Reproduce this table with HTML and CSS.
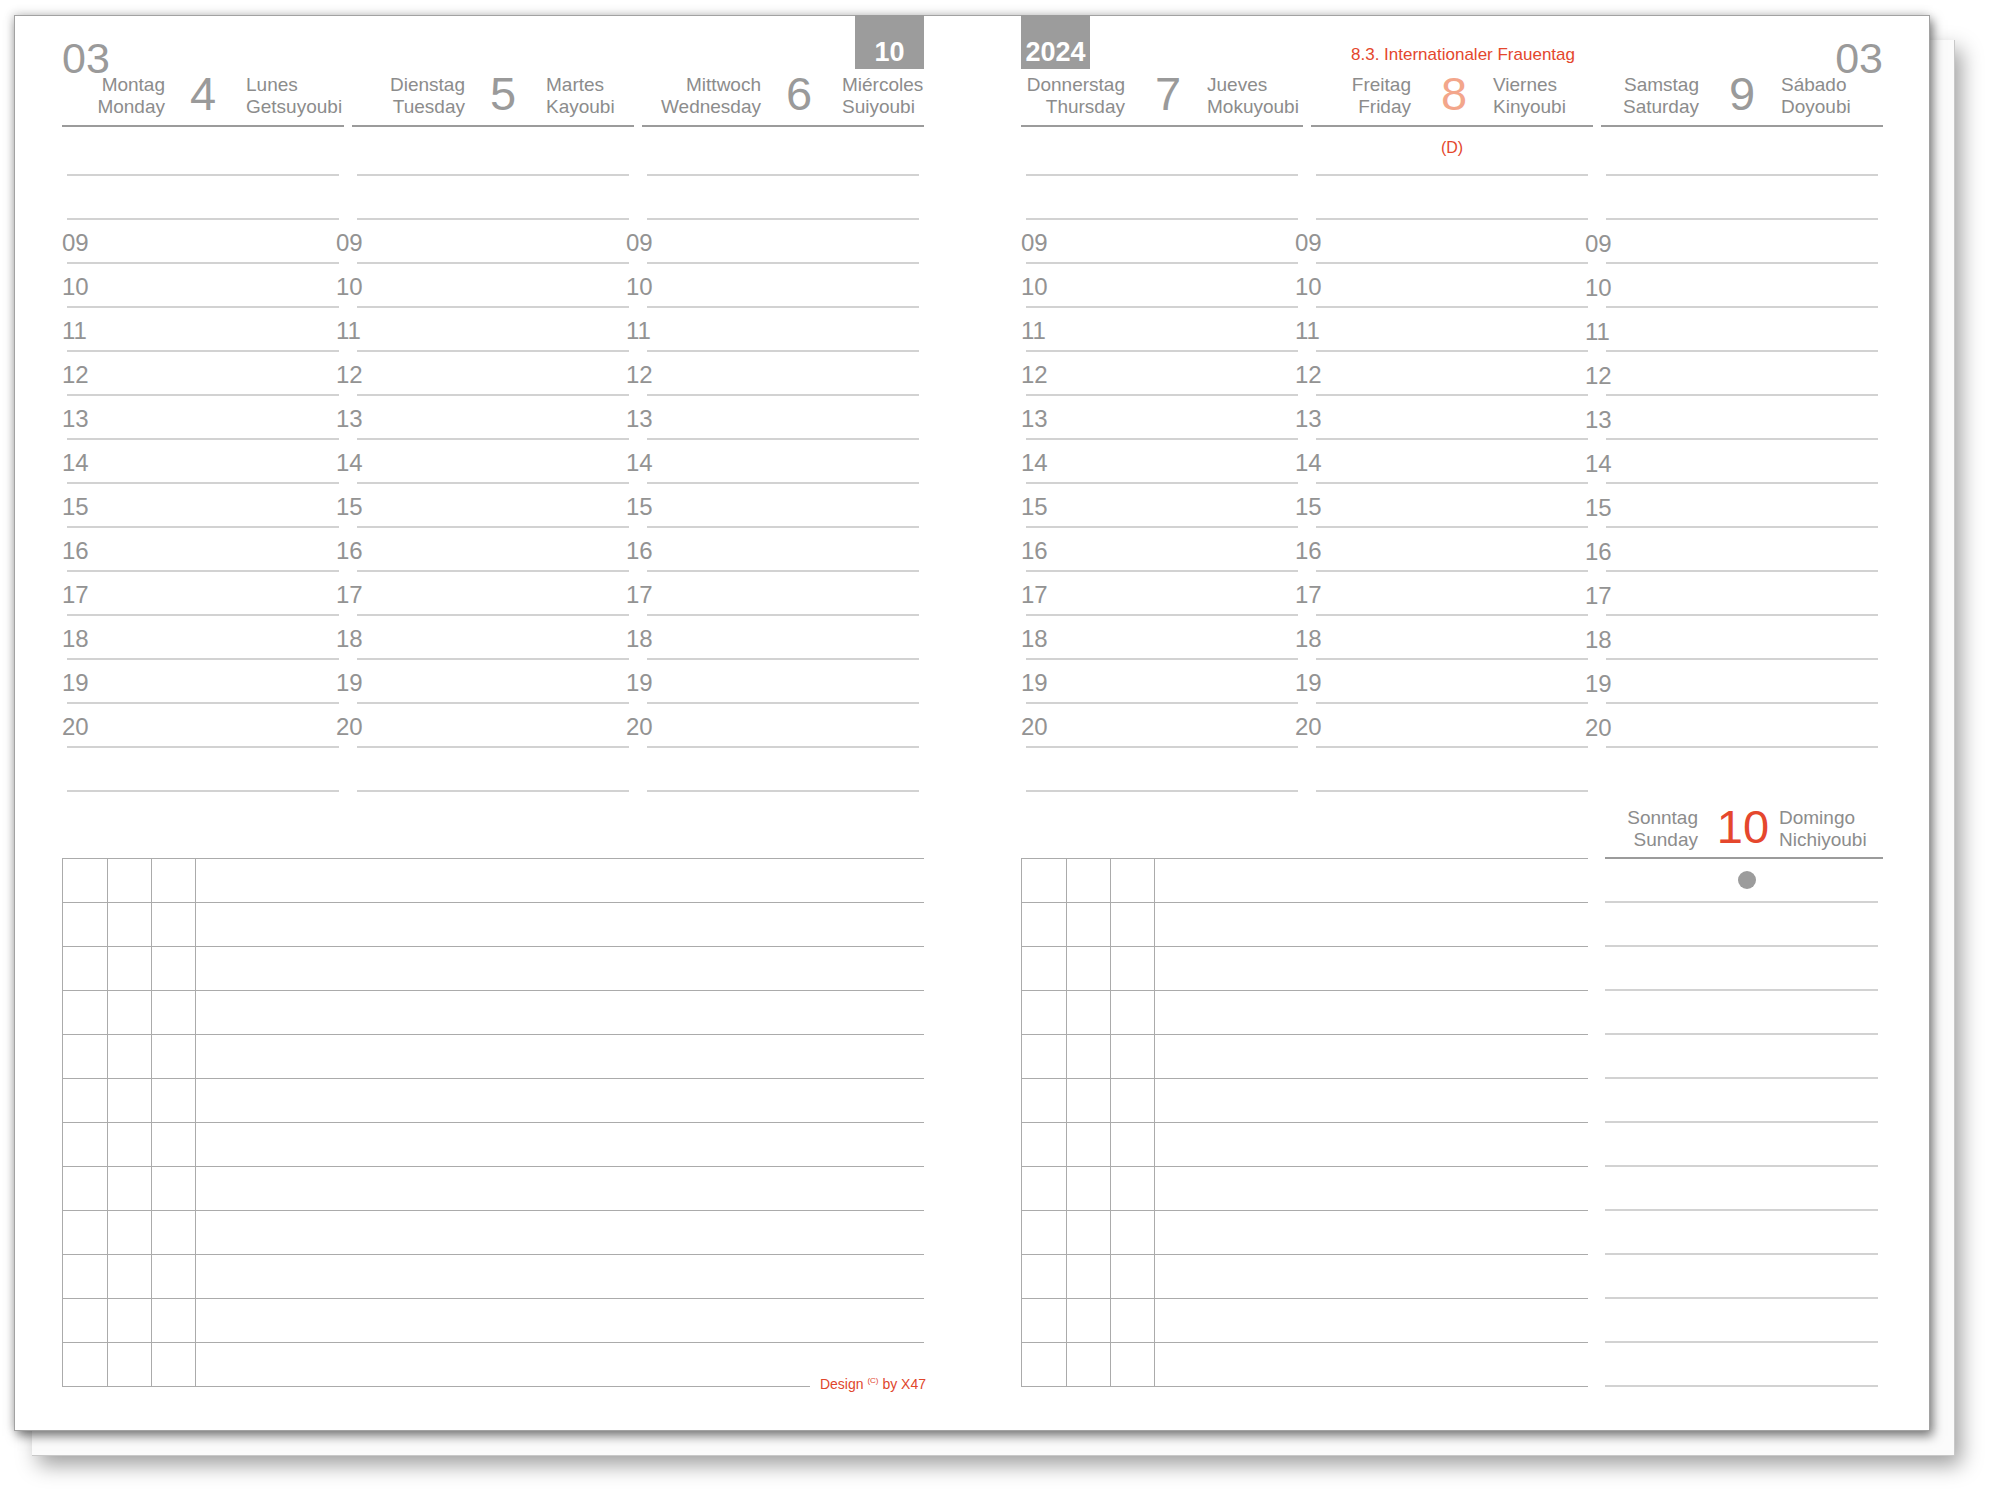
FILE: index.html
```html
<!DOCTYPE html>
<html lang="de">
<head>
<meta charset="utf-8">
<title>Wochenkalender 2024 – KW 10</title>
<link rel="stylesheet" href="styles.css">
</head>
<body>
<div class="book">
  <div class="back"></div>
  <div class="sheet">

    <section class="page left">
      <div class="days">
        <div class="day first">
          <div class="dhead">
            <div class="slot"><span class="month">03</span></div>
            <div class="drow">
              <div class="dl"><span>Montag</span><span>Monday</span></div>
              <div class="dn">4</div>
              <div class="dr"><span>Lunes</span><span>Getsuyoubi</span></div>
            </div>
          </div>
          <div class="rows">
            <div class="row"></div><div class="row"></div>
            <div class="row"><span class="hr">09</span></div>
            <div class="row"><span class="hr">10</span></div>
            <div class="row"><span class="hr">11</span></div>
            <div class="row"><span class="hr">12</span></div>
            <div class="row"><span class="hr">13</span></div>
            <div class="row"><span class="hr">14</span></div>
            <div class="row"><span class="hr">15</span></div>
            <div class="row"><span class="hr">16</span></div>
            <div class="row"><span class="hr">17</span></div>
            <div class="row"><span class="hr">18</span></div>
            <div class="row"><span class="hr">19</span></div>
            <div class="row"><span class="hr">20</span></div>
            <div class="row"></div>
          </div>
        </div>

        <div class="day">
          <div class="dhead">
            <div class="slot"></div>
            <div class="drow sh10">
              <div class="dl"><span>Dienstag</span><span>Tuesday</span></div>
              <div class="dn">5</div>
              <div class="dr"><span>Martes</span><span>Kayoubi</span></div>
            </div>
          </div>
          <div class="rows">
            <div class="row"></div><div class="row"></div>
            <div class="row"><span class="hr">09</span></div>
            <div class="row"><span class="hr">10</span></div>
            <div class="row"><span class="hr">11</span></div>
            <div class="row"><span class="hr">12</span></div>
            <div class="row"><span class="hr">13</span></div>
            <div class="row"><span class="hr">14</span></div>
            <div class="row"><span class="hr">15</span></div>
            <div class="row"><span class="hr">16</span></div>
            <div class="row"><span class="hr">17</span></div>
            <div class="row"><span class="hr">18</span></div>
            <div class="row"><span class="hr">19</span></div>
            <div class="row"><span class="hr">20</span></div>
            <div class="row"></div>
          </div>
        </div>

        <div class="day">
          <div class="dhead">
            <div class="slot end"><span class="tab">10</span></div>
            <div class="drow sh16">
              <div class="dl"><span>Mittwoch</span><span>Wednesday</span></div>
              <div class="dn">6</div>
              <div class="dr"><span>Miércoles</span><span>Suiyoubi</span></div>
            </div>
          </div>
          <div class="rows">
            <div class="row"></div><div class="row"></div>
            <div class="row"><span class="hr">09</span></div>
            <div class="row"><span class="hr">10</span></div>
            <div class="row"><span class="hr">11</span></div>
            <div class="row"><span class="hr">12</span></div>
            <div class="row"><span class="hr">13</span></div>
            <div class="row"><span class="hr">14</span></div>
            <div class="row"><span class="hr">15</span></div>
            <div class="row"><span class="hr">16</span></div>
            <div class="row"><span class="hr">17</span></div>
            <div class="row"><span class="hr">18</span></div>
            <div class="row"><span class="hr">19</span></div>
            <div class="row"><span class="hr">20</span></div>
            <div class="row"></div>
          </div>
        </div>
      </div>

      <div class="grid">
        <div class="gr"><i></i><i></i><i></i><b></b></div>
        <div class="gr"><i></i><i></i><i></i><b></b></div>
        <div class="gr"><i></i><i></i><i></i><b></b></div>
        <div class="gr"><i></i><i></i><i></i><b></b></div>
        <div class="gr"><i></i><i></i><i></i><b></b></div>
        <div class="gr"><i></i><i></i><i></i><b></b></div>
        <div class="gr"><i></i><i></i><i></i><b></b></div>
        <div class="gr"><i></i><i></i><i></i><b></b></div>
        <div class="gr"><i></i><i></i><i></i><b></b></div>
        <div class="gr"><i></i><i></i><i></i><b></b></div>
        <div class="gr"><i></i><i></i><i></i><b></b></div>
        <div class="gr"><i></i><i></i><i></i><b class="sign"><span class="ln"></span><span class="design">Design <sup>(C)</sup> by X47</span></b></div>
      </div>
    </section>

    <section class="page right">
      <div class="main">
        <div class="days two">
          <div class="day first">
            <div class="dhead">
              <div class="slot"><span class="tab">2024</span></div>
              <div class="drow sh6 tight">
                <div class="dl"><span>Donnerstag</span><span>Thursday</span></div>
                <div class="dn">7</div>
                <div class="dr"><span>Jueves</span><span>Mokuyoubi</span></div>
              </div>
            </div>
            <div class="rows">
              <div class="row"></div><div class="row"></div>
              <div class="row"><span class="hr">09</span></div>
              <div class="row"><span class="hr">10</span></div>
              <div class="row"><span class="hr">11</span></div>
              <div class="row"><span class="hr">12</span></div>
              <div class="row"><span class="hr">13</span></div>
              <div class="row"><span class="hr">14</span></div>
              <div class="row"><span class="hr">15</span></div>
              <div class="row"><span class="hr">16</span></div>
              <div class="row"><span class="hr">17</span></div>
              <div class="row"><span class="hr">18</span></div>
              <div class="row"><span class="hr">19</span></div>
              <div class="row"><span class="hr">20</span></div>
              <div class="row"></div>
            </div>
          </div>

          <div class="day">
            <div class="dhead">
              <div class="slot"><span class="holiday">8.3. Internationaler Frauentag</span></div>
              <div class="drow sh2 tight">
                <div class="dl"><span>Freitag</span><span>Friday</span></div>
                <div class="dn fri">8</div>
                <div class="dr"><span>Viernes</span><span>Kinyoubi</span></div>
              </div>
            </div>
            <div class="rows">
              <div class="row note"><span class="region">(D)</span></div><div class="row"></div>
              <div class="row"><span class="hr">09</span></div>
              <div class="row"><span class="hr">10</span></div>
              <div class="row"><span class="hr">11</span></div>
              <div class="row"><span class="hr">12</span></div>
              <div class="row"><span class="hr">13</span></div>
              <div class="row"><span class="hr">14</span></div>
              <div class="row"><span class="hr">15</span></div>
              <div class="row"><span class="hr">16</span></div>
              <div class="row"><span class="hr">17</span></div>
              <div class="row"><span class="hr">18</span></div>
              <div class="row"><span class="hr">19</span></div>
              <div class="row"><span class="hr">20</span></div>
              <div class="row"></div>
            </div>
          </div>
        </div>

        <div class="grid narrow">
          <div class="gr"><i></i><i></i><i></i><b></b></div>
          <div class="gr"><i></i><i></i><i></i><b></b></div>
          <div class="gr"><i></i><i></i><i></i><b></b></div>
          <div class="gr"><i></i><i></i><i></i><b></b></div>
          <div class="gr"><i></i><i></i><i></i><b></b></div>
          <div class="gr"><i></i><i></i><i></i><b></b></div>
          <div class="gr"><i></i><i></i><i></i><b></b></div>
          <div class="gr"><i></i><i></i><i></i><b></b></div>
          <div class="gr"><i></i><i></i><i></i><b></b></div>
          <div class="gr"><i></i><i></i><i></i><b></b></div>
          <div class="gr"><i></i><i></i><i></i><b></b></div>
          <div class="gr"><i></i><i></i><i></i><b></b></div>
        </div>
      </div>

      <div class="day sat">
        <div class="dhead">
          <div class="slot end"><span class="month">03</span></div>
          <div class="drow tight">
            <div class="dl"><span>Samstag</span><span>Saturday</span></div>
            <div class="dn">9</div>
            <div class="dr"><span>Sábado</span><span>Doyoubi</span></div>
          </div>
        </div>
        <div class="rows low">
          <div class="row"></div><div class="row"></div>
          <div class="row"><span class="hr">09</span></div>
          <div class="row"><span class="hr">10</span></div>
          <div class="row"><span class="hr">11</span></div>
          <div class="row"><span class="hr">12</span></div>
          <div class="row"><span class="hr">13</span></div>
          <div class="row"><span class="hr">14</span></div>
          <div class="row"><span class="hr">15</span></div>
          <div class="row"><span class="hr">16</span></div>
          <div class="row"><span class="hr">17</span></div>
          <div class="row"><span class="hr">18</span></div>
          <div class="row"><span class="hr">19</span></div>
          <div class="row"><span class="hr">20</span></div>
        </div>

        <div class="sunhead">
          <div class="drow sunday">
            <div class="dl"><span>Sonntag</span><span>Sunday</span></div>
            <div class="dn sun">10</div>
            <div class="dr"><span>Domingo</span><span>Nichiyoubi</span></div>
          </div>
        </div>
        <div class="rows sunrows">
          <div class="row dotrow"><span class="dot"></span></div>
          <div class="row"></div><div class="row"></div><div class="row"></div>
          <div class="row"></div><div class="row"></div><div class="row"></div>
          <div class="row"></div><div class="row"></div><div class="row"></div>
          <div class="row"></div><div class="row"></div>
        </div>
      </div>
    </section>

  </div>
</div>
</body>
</html>
```
FILE: styles.css
```css
* { box-sizing: border-box; margin: 0; padding: 0; }

html, body { background: #ffffff; }

body {
  width: 2000px;
  height: 1501px;
  overflow: hidden;
  font-family: "Liberation Sans", Arial, sans-serif;
  color: #8e8e8e;
}

.book {
  position: relative;
  width: 1916px;
  height: 1416px;
  margin: 15px 0 0 14px;
}

.back {
  position: absolute;
  left: 18px;
  top: 25px;
  width: 1923px;
  height: 1416px;
  background: #fbfbfb;
  border-right: 1px solid #c8c8c8;
  border-bottom: 1px solid #c8c8c8;
  box-shadow: 6px 9px 20px rgba(0, 0, 0, 0.38);
}

.sheet {
  position: relative;
  width: 1916px;
  height: 1416px;
  background: #ffffff;
  border: 1px solid #a2a2a2;
  box-shadow: -2px -2px 9px rgba(0, 0, 0, 0.13), 3px 5px 10px rgba(0, 0, 0, 0.5);
  display: flex;
  gap: 97px;
  padding: 0 46px 0 47px;
}

.page {
  width: 862px;
  display: flex;
  flex-direction: column;
}

.page.right {
  flex-direction: row;
  gap: 8px;
}

.main {
  width: 572px;
  display: flex;
  flex-direction: column;
}

.days {
  display: grid;
  grid-template-columns: repeat(3, 1fr);
  column-gap: 8px;
}

.days.two { grid-template-columns: repeat(2, 1fr); }

.sat { width: 282px; }

/* ---------- day header ---------- */
.dhead {
  height: 111px;
  display: flex;
  flex-direction: column;
  padding-bottom: 8px;
  border-bottom: 2px solid #9b9b9b;
}

.slot {
  height: 54px;
  display: flex;
  align-items: flex-end;
}

.slot.end { justify-content: flex-end; }

.month {
  font-size: 43px;
  line-height: 43px;
  color: #9a9a9a;
  margin-bottom: -10px;
}

.tab {
  align-self: flex-start;
  margin-top: -1px;
  width: 69px;
  height: 54px;
  background: #9c9c9c;
  color: #ffffff;
  font-weight: bold;
  font-size: 27px;
  line-height: 27px;
  display: flex;
  align-items: flex-end;
  justify-content: center;
  padding-bottom: 3px;
}

.holiday {
  width: 100%;
  text-align: center;
  padding-left: 22px;
  margin-bottom: 7px;
  font-size: 17px;
  line-height: 17px;
  color: #e4472d;
  white-space: nowrap;
}

.drow {
  height: 47px;
  display: grid;
  grid-template-columns: 1fr 60px 1fr;
  align-items: end;
}

.drow.sh2 { padding-left: 4px; }
.drow.sh6 { padding-left: 12px; }
.drow.sh10 { padding-left: 20px; }
.drow.sh16 { padding-left: 32px; }

.dl, .dr {
  display: flex;
  flex-direction: column;
  font-size: 19px;
  line-height: 22px;
  white-space: nowrap;
  color: #8c8c8c;
  min-width: 0;
  margin-bottom: -1px;
}

.dl { align-items: flex-end; padding-right: 8px; }
.dr { align-items: flex-start; padding-left: 13px; }

.drow.tight .dl { padding-right: 13px; }
.drow.tight .dr { padding-left: 9px; }

.drow.sunday { padding-right: 2px; }
.drow.sunday .dl { padding-right: 15px; }
.drow.sunday .dr { padding-left: 6px; }

.dn {
  font-size: 47px;
  line-height: 47px;
  text-align: center;
  color: #9a9a9a;
  white-space: nowrap;
}

.dn.fri { color: #f3a68b; }
.dn.sun { color: #e5472d; }

/* ---------- hour rows ---------- */
.rows { margin-top: 5px; }

.row {
  height: 44px;
  margin: 0 5px;
  border-bottom: 2px solid #d2d2d2;
  display: flex;
  align-items: flex-end;
  padding-bottom: 7px;
}

.hr {
  font-size: 24px;
  line-height: 24px;
  color: #939393;
  margin-left: -21px;
}

.first .hr { margin-left: -5px; }

.rows.low .hr { margin-bottom: -1px; }

.row.note {
  align-items: flex-start;
  justify-content: center;
  padding: 8px 0 0 0;
}

.region {
  font-size: 16px;
  line-height: 16px;
  color: #e4472d;
}

/* ---------- sunday ---------- */
.sunhead {
  margin: 55px 0 0 4px;
  padding-bottom: 7px;
  border-bottom: 2px solid #9b9b9b;
}

.sunrows { margin-top: 0; }
.sunrows .row { margin: 0 5px 0 4px; }

.row.dotrow {
  align-items: center;
  justify-content: center;
  padding: 0 0 0 10px;
}

.dot {
  width: 18px;
  height: 18px;
  border-radius: 50%;
  background: #9c9c9c;
}

/* ---------- notes grid ---------- */
.grid {
  margin-top: 66px;
  border-top: 1px solid #ababab;
}

.grid.narrow { margin-right: 5px; }

.gr {
  display: grid;
  grid-template-columns: 45px 44px 44px 1fr;
  height: 44px;
}

.gr > i, .gr > b {
  display: block;
  border-left: 1px solid #ababab;
  border-bottom: 1px solid #ababab;
}

.gr > b.sign {
  border-bottom: none;
  display: flex;
  align-items: flex-end;
}

.sign .ln {
  flex: 1;
  height: 100%;
  border-bottom: 1px solid #ababab;
}

.design {
  margin-left: 10px;
  margin-right: -2px;
  margin-bottom: -4px;
  font-size: 14px;
  line-height: 14px;
  font-weight: normal;
  color: #e0462c;
  white-space: nowrap;
}

.design sup {
  font-size: 8px;
  vertical-align: 6px;
  line-height: 0;
}
```
